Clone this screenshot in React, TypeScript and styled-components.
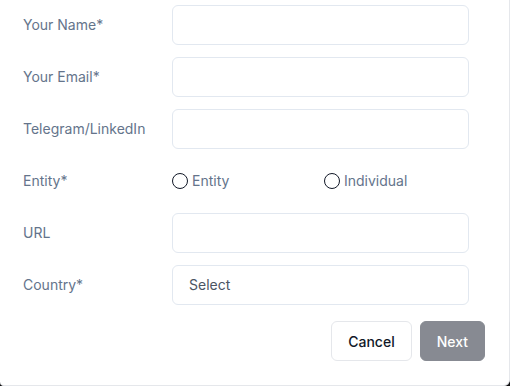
import React from "react";
import styled, { createGlobalStyle } from "styled-components";

const Global = createGlobalStyle`
  html, body { margin: 0; padding: 0; background: #0f0f10; }
  body { font-family: Inter, "Noto Sans", sans-serif; -webkit-font-smoothing: antialiased; }
  * { box-sizing: border-box; }
`;

const Modal = styled.div`
  width: 510px;
  height: 386px;
  background: #ffffff;
  border-right: 1px solid #e5e7eb;
  border-bottom: 1px solid #e5e7eb;
  border-radius: 0 0 6px 4px;
  padding: 5px 24px 24px 23px;
  display: flex;
  flex-direction: column;
  overflow: hidden;
`;

const Form = styled.div`
  display: grid;
  grid-template-columns: 149px 297px;
  grid-auto-rows: 40px;
  row-gap: 12px;
  align-items: center;
`;

const Label = styled.label`
  font-size: 14px;
  font-weight: 400;
  color: #64748b;
  line-height: 20px;
`;

const Input = styled.input`
  height: 40px;
  width: 100%;
  border: 1px solid #e2e8f0;
  border-radius: 6px;
  background: #fff;
  padding: 0 16px;
  font-family: inherit;
  font-size: 14px;
  outline: none;
`;

const SelectBox = styled.div`
  height: 40px;
  width: 100%;
  border: 1px solid #e2e8f0;
  border-radius: 6px;
  padding: 0 16px;
  display: flex;
  align-items: center;
  font-size: 14px;
  font-weight: 400;
  color: #4b5563;
  line-height: 20px;
  padding-bottom: 1px;
`;

const RadioGroup = styled.div`
  display: flex;
  gap: 7px;
  height: 40px;
  align-items: center;
`;

const RadioOption = styled.label`
  flex: 1;
  display: flex;
  align-items: center;
  gap: 4px;
  font-size: 14px;
  font-weight: 400;
  color: #64748b;
  line-height: 20px;
`;

const RadioCircle = styled.span`
  width: 16px;
  height: 16px;
  border-radius: 50%;
  border: 1.3px solid #111827;
  display: inline-block;
  flex: none;
`;

const Footer = styled.div`
  display: flex;
  justify-content: flex-end;
  gap: 8px;
  margin-top: 16px;
`;

const Button = styled.button<{ $primary?: boolean }>`
  height: 40px;
  padding: 0 16px;
  border-radius: 6px;
  font-family: inherit;
  font-size: 14px;
  font-weight: 500;
  border: 1px solid ${(p) => (p.$primary ? "#111827" : "#e5e7eb")};
  background: ${(p) => (p.$primary ? "#111827" : "#ffffff")};
  color: ${(p) => (p.$primary ? "#ffffff" : "#111827")};
  opacity: ${(p) => (p.$primary ? 0.5 : 1)};
`;

export default function App() {
  return (
    <>
      <Global />
      <Modal>
        <Form>
          <Label>Your Name*</Label>
          <Input />
          <Label>Your Email*</Label>
          <Input />
          <Label>Telegram/LinkedIn</Label>
          <Input />
          <Label>Entity*</Label>
          <RadioGroup>
            <RadioOption>
              <RadioCircle />
              Entity
            </RadioOption>
            <RadioOption>
              <RadioCircle />
              Individual
            </RadioOption>
          </RadioGroup>
          <Label>URL</Label>
          <Input />
          <Label>Country*</Label>
          <SelectBox>Select</SelectBox>
        </Form>
        <Footer>
          <Button>Cancel</Button>
          <Button $primary>Next</Button>
        </Footer>
      </Modal>
    </>
  );
}
